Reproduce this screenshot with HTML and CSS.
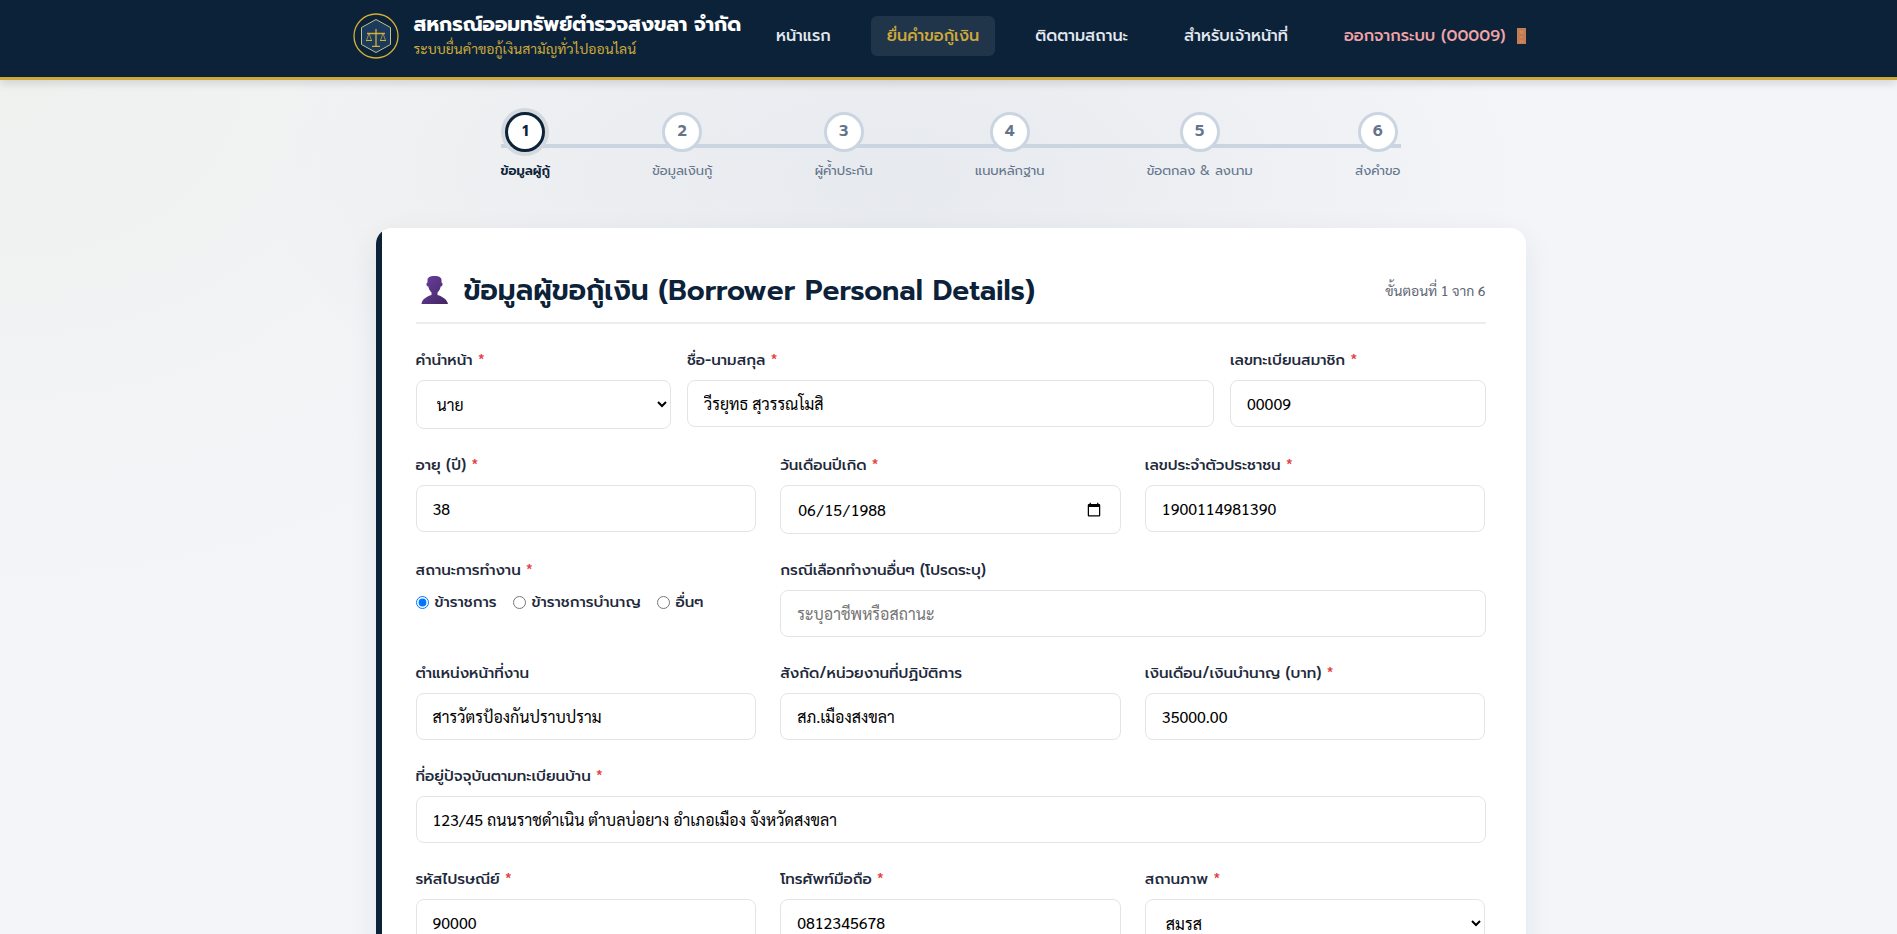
FILE: index.html
```html
<!DOCTYPE html>
<html lang="th">
<head>
  <meta charset="UTF-8">
  <meta name="viewport" content="width=device-width, initial-scale=1.0">
  <title>ยื่นคำขอกู้เงิน</title>
  <link rel="stylesheet" href="styles.css">
</head>
<body>
  <header class="site-header">
    <div class="header-inner">
      <a href="#" class="brand">
        <svg class="brand-logo" viewBox="0 0 48 48" fill="none" stroke="#d4af37">
          <circle cx="24" cy="24" r="22" stroke-width="1.3"/>
          <path d="M24 7.500 38.500 15.500V32.500L24 40.500 9.500 32.500V15.500Z" fill="#1b3a5c" stroke="#bfc48b"/>
          <path d="M24 17V34M20 34.300H28M15 21.500H33" stroke-width="1.3"/>
          <path d="M17 21.500 14.500 28.500M17 21.500 19.500 28.500M31 21.500 28.500 28.500M31 21.500 33.500 28.500" stroke-width=".7"/>
          <path d="M14 28.500H20M28 28.500H34"/>
        </svg>
        <span class="brand-text">
          <span class="brand-name">สหกรณ์ออมทรัพย์ตำรวจสงขลา จำกัด</span>
          <span class="brand-sub">ระบบยื่นคำขอกู้เงินสามัญทั่วไปออนไลน์</span>
        </span>
      </a>
      <nav class="nav-menu">
        <a href="#">หน้าแรก</a>
        <a href="#" class="active">ยื่นคำขอกู้เงิน</a>
        <a href="#">ติดตามสถานะ</a>
        <a href="#">สำหรับเจ้าหน้าที่</a>
        <a href="#" class="logout">ออกจากระบบ (00009)
          <svg class="door" viewBox="0 0 20 20">
            <rect x="5" y="2" width="9" height="16" fill="#c67c55"/>
            <path d="M7 4H12V8H7ZM7 10H12V12H7ZM7 14H12V17H7Z" fill="#d08a60" stroke="#b87048" stroke-width=".5"/>
          </svg>
        </a>
      </nav>
    </div>
  </header>

  <main class="container">
    <ol class="stepper">
      <li class="step active"><span class="step-circle">1</span><span class="step-label">ข้อมูลผู้กู้</span></li>
      <li class="step"><span class="step-circle">2</span><span class="step-label">ข้อมูลเงินกู้</span></li>
      <li class="step"><span class="step-circle">3</span><span class="step-label">ผู้ค้ำประกัน</span></li>
      <li class="step"><span class="step-circle">4</span><span class="step-label">แนบหลักฐาน</span></li>
      <li class="step"><span class="step-circle">5</span><span class="step-label">ข้อตกลง &amp; ลงนาม</span></li>
      <li class="step"><span class="step-circle">6</span><span class="step-label">ส่งคำขอ</span></li>
    </ol>

    <form class="card">
      <div class="card-header">
        <h2>
          <svg class="title-icon" viewBox="0 0 38 38">
            <defs>
              <linearGradient id="bust" x1="0" y1="0" x2="1" y2="1">
                <stop offset="0" stop-color="#6b3fa0"/>
                <stop offset="1" stop-color="#432563"/>
              </linearGradient>
            </defs>
            <path d="M5.500 33C6 28 11 25.500 15.500 24V21.500C14 20 12.800 18 12.300 15.500 10 15.500 10 11.500 11.500 11.500V9C11.500 6.500 14 5 18.500 5S25.500 6.500 25.500 9V11.500C27 11.500 27 15.500 24.700 15.500 24.200 18 23 20 21.500 21.500V24C26 25.500 31 28 32 33Z" fill="url(#bust)"/>
          </svg>
          ข้อมูลผู้ขอกู้เงิน (Borrower Personal Details)
        </h2>
        <span class="step-count">ขั้นตอนที่ 1 จาก 6</span>
      </div>

      <div class="form-row row-name">
        <div class="form-group">
          <label for="prefix">คำนำหน้า <span class="req">*</span></label>
          <select id="prefix">
            <option>นาย</option>
            <option>นาง</option>
            <option>นางสาว</option>
          </select>
        </div>
        <div class="form-group">
          <label for="fullname">ชื่อ-นามสกุล <span class="req">*</span></label>
          <input type="text" id="fullname" value="วีรยุทธ สุวรรณโมสิ">
        </div>
        <div class="form-group">
          <label for="member">เลขทะเบียนสมาชิก <span class="req">*</span></label>
          <input type="text" id="member" value="00009">
        </div>
      </div>

      <div class="form-row">
        <div class="form-group">
          <label for="age">อายุ (ปี) <span class="req">*</span></label>
          <input type="text" id="age" value="38">
        </div>
        <div class="form-group">
          <label for="birthdate">วันเดือนปีเกิด <span class="req">*</span></label>
          <input type="date" id="birthdate" value="1988-06-15">
        </div>
        <div class="form-group">
          <label for="idcard">เลขประจำตัวประชาชน <span class="req">*</span></label>
          <input type="text" id="idcard" value="1900114981390">
        </div>
      </div>

      <div class="form-row">
        <fieldset class="form-group">
          <legend>สถานะการทำงาน <span class="req">*</span></legend>
          <div class="radio-group">
            <label><input type="radio" name="work" checked>ข้าราชการ</label>
            <label><input type="radio" name="work">ข้าราชการบำนาญ</label>
            <label><input type="radio" name="work">อื่นๆ</label>
          </div>
        </fieldset>
        <div class="form-group span-2">
          <label for="other">กรณีเลือกทำงานอื่นๆ (โปรดระบุ)</label>
          <input type="text" id="other" placeholder="ระบุอาชีพหรือสถานะ">
        </div>
      </div>

      <div class="form-row">
        <div class="form-group">
          <label for="position">ตำแหน่งหน้าที่งาน</label>
          <input type="text" id="position" value="สารวัตรป้องกันปราบปราม">
        </div>
        <div class="form-group">
          <label for="office">สังกัด/หน่วยงานที่ปฏิบัติการ</label>
          <input type="text" id="office" value="สภ.เมืองสงขลา">
        </div>
        <div class="form-group">
          <label for="salary">เงินเดือน/เงินบำนาญ (บาท) <span class="req">*</span></label>
          <input type="text" id="salary" value="35000.00">
        </div>
      </div>

      <div class="form-row">
        <div class="form-group span-3">
          <label for="address">ที่อยู่ปัจจุบันตามทะเบียนบ้าน <span class="req">*</span></label>
          <input type="text" id="address" value="123/45 ถนนราชดำเนิน ตำบลบ่อยาง อำเภอเมือง จังหวัดสงขลา">
        </div>
      </div>

      <div class="form-row">
        <div class="form-group">
          <label for="zip">รหัสไปรษณีย์ <span class="req">*</span></label>
          <input type="text" id="zip" value="90000">
        </div>
        <div class="form-group">
          <label for="mobile">โทรศัพท์มือถือ <span class="req">*</span></label>
          <input type="tel" id="mobile" value="0812345678">
        </div>
        <div class="form-group">
          <label for="marital">สถานภาพ <span class="req">*</span></label>
          <select id="marital">
            <option>สมรส</option>
            <option>โสด</option>
            <option>หย่า</option>
          </select>
        </div>
      </div>
    </form>
  </main>
</body>
</html>
```
FILE: styles.css
```css
:root {
  --navy: #0c2239;
  --gold: #cda93c;
  --line: #cbd5e1;
  --muted: #64748b;
  --heading-font: "Prompt", "Noto Sans", "Noto Sans Thai", sans-serif;
  --body-font: "Sarabun", "Open Sans", "Noto Sans Thai", sans-serif;
}
* {
  box-sizing: border-box;
}
body {
  margin: 0;
  font-family: var(--body-font);
  font-size: 16px;
  color: #1e293b;
  background:
    radial-gradient(ellipse 640px 320px at 47% 180px, rgba(30, 45, 50, 0.06), transparent),
    radial-gradient(ellipse 760px 560px at 0 80px, rgba(190, 190, 110, 0.07), transparent),
    #f3f5f9;
}
.site-header {
  height: 80px;
  padding-left: 6px;
  background: var(--navy);
  border-bottom: 3px solid var(--gold);
  box-shadow: 0 4px 8px rgba(0, 0, 0, 0.12);
}
.header-inner {
  max-width: 1200px;
  height: 72px;
  margin: 0 auto;
  padding-right: 4px;
  display: flex;
  justify-content: space-between;
  align-items: center;
}
.brand {
  display: flex;
  align-items: center;
  gap: 14px;
  text-decoration: none;
}
.brand-logo {
  width: 48px;
  height: 48px;
}
.brand-text {
  display: flex;
  flex-direction: column;
}
.brand-name {
  font-family: var(--heading-font);
  font-size: 20px;
  font-weight: 700;
  line-height: 24px;
  color: #fff;
  white-space: nowrap;
}
.brand-sub {
  font-size: 14px;
  line-height: 24px;
  color: var(--gold);
}
.nav-menu {
  display: flex;
  gap: 24px;
}
.nav-menu a {
  display: flex;
  align-items: center;
  gap: 6px;
  height: 40px;
  padding: 0 16px;
  border-radius: 6px;
  font-family: var(--heading-font);
  font-size: 16px;
  font-weight: 500;
  color: #e2e8f0;
  text-decoration: none;
  white-space: nowrap;
}
.nav-menu a.active {
  background: #20344a;
  color: var(--gold);
}
.nav-menu a.logout {
  color: #f0a5a8;
}
.door {
  width: 20px;
  height: 20px;
}
.container {
  max-width: 1206px;
  margin: 0 auto;
  padding: 32px 26px 40px 30px;
}
.stepper {
  position: relative;
  display: flex;
  justify-content: space-between;
  max-width: 900px;
  margin: 0 auto 46px;
  padding: 0;
  list-style: none;
}
.stepper::before {
  content: "";
  position: absolute;
  top: 32px;
  left: 0;
  right: 0;
  height: 4px;
  background: var(--line);
}
.step {
  position: relative;
  display: flex;
  flex-direction: column;
  align-items: center;
  gap: 8px;
  font-family: var(--heading-font);
  color: var(--muted);
}
.step-circle {
  width: 40px;
  height: 40px;
  border: 3px solid var(--line);
  border-radius: 50%;
  background: #fff;
  font-size: 16px;
  font-weight: 600;
  line-height: 32px;
  text-align: center;
}
.step-label {
  font-size: 13px;
  line-height: 22px;
}
.step.active {
  color: var(--navy);
}
.step.active .step-circle {
  border-color: var(--navy);
  box-shadow: 0 0 0 4px #d3d9de;
}
.step.active .step-label {
  font-weight: 600;
}
.card {
  position: relative;
  overflow: hidden;
  padding: 40px;
  background: #fff;
  border-radius: 16px;
  box-shadow: 0 10px 30px rgba(12, 34, 57, 0.08);
}
.card::before {
  content: "";
  position: absolute;
  top: 0;
  bottom: 0;
  left: 0;
  width: 6px;
  background: var(--navy);
}
.card-header {
  display: flex;
  justify-content: space-between;
  align-items: center;
  height: 56px;
  margin-bottom: 24px;
  padding-bottom: 10px;
  border-bottom: 2px solid #ebedef;
}
.card-header h2 {
  display: flex;
  align-items: center;
  gap: 10px;
  margin: 0;
  font-family: var(--heading-font);
  font-size: 28px;
  font-weight: 600;
  color: var(--navy);
}
.title-icon {
  width: 38px;
  height: 38px;
}
.step-count {
  font-size: 14px;
  color: #5d6673;
}
.form-row {
  display: grid;
  grid-template-columns: repeat(3, 1fr);
  gap: 24px;
  align-items: start;
  margin-bottom: 24px;
}
.row-name {
  grid-template-columns: 256fr 528fr 256fr;
  gap: 16px;
}
.span-2 {
  grid-column: span 2;
}
.span-3 {
  grid-column: span 3;
}
.form-group {
  min-width: 0;
  margin: 0;
  padding: 0;
  border: none;
}
.form-group > label,
.form-group > legend {
  display: block;
  margin-bottom: 8px;
  padding: 0;
  font-family: var(--heading-font);
  font-size: 15px;
  font-weight: 500;
  line-height: 24px;
}
.req {
  color: #e53e3e;
}
.form-group > input,
.form-group > select {
  display: block;
  width: 100%;
  height: 47px;
  padding: 0 16px;
  border: 1px solid #e2e4e8;
  border-radius: 8px;
  background: #fff;
  font-family: var(--body-font);
  font-size: 16px;
  color: #000;
}
.form-group > select,
.form-group > input[type="date"] {
  height: 49px;
}
.radio-group {
  display: flex;
  gap: 16px;
}
.radio-group label {
  display: flex;
  align-items: center;
  gap: 6px;
  font-family: var(--heading-font);
  font-size: 15px;
  font-weight: 500;
  line-height: 24px;
}
.radio-group input {
  width: 13px;
  height: 13px;
  margin: 0;
}
```
